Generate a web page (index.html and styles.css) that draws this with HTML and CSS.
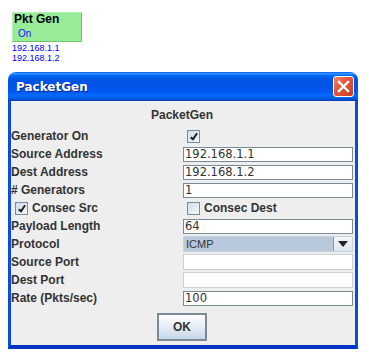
FILE: index.html
```
<!DOCTYPE html>
<html lang="en">
<head>
    <meta charset="UTF-8">
    <title>PacketGen</title>
    <link rel="stylesheet" href="styles.css">
</head>
<body>

<div class="node">
    <div class="node-box">
        <div class="node-name">Pkt Gen</div>
        <div class="node-state">On</div>
    </div>
    <div class="node-ips">
        <div>192.168.1.1</div>
        <div>192.168.1.2</div>
    </div>
</div>

<div class="window">
    <div class="titlebar">
        <span class="title">PacketGen</span>
        <span class="close">
            <svg width="13" height="13" viewBox="0 0 13 13">
                <path d="M2 2 L11 11 M11 2 L2 11" stroke="#fff" stroke-width="2.4" stroke-linecap="square"/>
            </svg>
        </span>
    </div>

    <div class="panel">
        <div class="heading">PacketGen</div>

        <div class="form">
            <label>Generator On</label>
            <div class="cell"><span class="check on"></span></div>

            <label>Source Address</label>
            <div class="cell"><div class="field">192.168.1.1</div></div>

            <label>Dest Address</label>
            <div class="cell"><div class="field">192.168.1.2</div></div>

            <label># Generators</label>
            <div class="cell"><div class="field">1</div></div>

            <label class="indent"><span class="check on"></span>Consec Src</label>
            <label class="indent"><span class="check"></span>Consec Dest</label>

            <label>Payload Length</label>
            <div class="cell"><div class="field">64</div></div>

            <label>Protocol</label>
            <div class="cell">
                <div class="combo">
                    <span class="combo-value">ICMP</span>
                    <span class="combo-arrow">
                        <svg width="10" height="6" viewBox="0 0 10 6"><path d="M0 0 H10 L5 6 Z" fill="#222"/></svg>
                    </span>
                </div>
            </div>

            <label>Source Port</label>
            <div class="cell"><div class="field off"></div></div>

            <label>Dest Port</label>
            <div class="cell"><div class="field off"></div></div>

            <label>Rate (Pkts/sec)</label>
            <div class="cell"><div class="field">100</div></div>
        </div>

        <div class="actions">
            <button class="ok">OK</button>
        </div>
    </div>
</div>

</body>
</html>
```

FILE: styles.css
```
body {
    margin: 0;
    background-color: #fff;
    font-family: "Liberation Sans", Arial, sans-serif;
    color: #333;
}

/* node on the canvas */
.node {
    margin: 12px 0 0 12px;
}

.node-box {
    box-sizing: border-box;
    width: 70px;
    height: 30px;
    background-color: #98ec98;
    border: 1px solid #b4f0b4;
    border-right-color: #6cc46c;
    border-bottom-color: #6cc46c;
}

.node-name {
    font-size: 12px;
    font-weight: bold;
    line-height: 12px;
    color: #000;
    padding-left: 1px;
}

.node-state {
    font-size: 10px;
    line-height: 12px;
    margin-top: 3px;
    padding-left: 5px;
    color: #1010ff;
}

.node-ips {
    margin-top: 1px;
    font-size: 9px;
    line-height: 10px;
    color: #0000ff;
}

/* dialog */
.window {
    box-sizing: border-box;
    width: 350px;
    margin: 9px 0 0 8px;
}

.titlebar {
    height: 29px;
    display: flex;
    align-items: center;
    justify-content: space-between;
    padding: 0 4px 0 8px;
    border-radius: 8px 8px 0 0;
    background: linear-gradient(#0058ee 0%, #3593ff 5%, #1680ff 9%, #036ffc 12%, #0262ee 16%, #0057e5 22%, #0054e3 30%, #0055eb 60%, #005bf5 70%, #026afe 80%, #0062ef 88%, #0052d6 94%, #0040ab 100%);
}

.title {
    font-family: "DejaVu Sans", Verdana, sans-serif;
    font-size: 12px;
    font-weight: bold;
    color: #fff;
    text-shadow: 1px 1px 0 #0a1e8c;
    margin-top: 1px;
}

.close {
    box-sizing: border-box;
    width: 21px;
    height: 21px;
    display: flex;
    align-items: center;
    justify-content: center;
    border: 1px solid #fff;
    border-radius: 3px;
    background: linear-gradient(135deg, #f0866a 0%, #e2583e 40%, #c9401f 100%);
}

.panel {
    background-color: #eee;
    border: 3px solid #0a4ce0;
    border-top: 0;
    border-bottom: 4px solid #0034c4;
    padding: 0 2px 2px 0;
}

.heading {
    text-align: center;
    font-size: 12px;
    font-weight: bold;
    line-height: 16px;
    padding: 6px 0 4px;
}

.form {
    display: grid;
    grid-template-columns: 172px 170px;
    grid-auto-rows: 18px;
    align-items: center;
}

.form label {
    font-size: 12px;
    font-weight: bold;
    line-height: 18px;
    display: flex;
    align-items: center;
}

.form label.indent {
    padding-left: 4px;
}

.cell {
    display: flex;
    align-items: center;
}

.check {
    box-sizing: border-box;
    width: 13px;
    height: 13px;
    margin-right: 4px;
    border: 1px solid #7a8a99;
    background: linear-gradient(135deg, #cfdcea 0%, #f4f7fb 100%);
    position: relative;
}

.cell .check {
    margin-left: 4px;
}

.check.on::after {
    content: "";
    position: absolute;
    left: 4px;
    top: 1px;
    width: 2px;
    height: 6px;
    border: solid #222;
    border-width: 0 2px 2px 0;
    transform: rotate(35deg);
}

.field {
    box-sizing: border-box;
    width: 170px;
    height: 15px;
    background-color: #fff;
    border: 1px solid #7a8a99;
    font-family: "DejaVu Sans", sans-serif;
    font-size: 11.5px;
    line-height: 13px;
    color: #333;
    padding-left: 1px;
}

.field.off {
    height: 16px;
    border-color: #c8d2dc;
}

.combo {
    box-sizing: border-box;
    width: 170px;
    height: 16px;
    display: flex;
    border: 1px solid #c8d2dc;
    background-color: #b8c9dc;
}

.combo-value {
    flex: 1;
    font-size: 11px;
    line-height: 14px;
    padding-left: 2px;
    color: #333;
}

.combo-arrow {
    width: 18px;
    display: flex;
    align-items: center;
    justify-content: center;
    border-left: 1px solid #8a9aab;
    background: linear-gradient(#f4f7fb, #dde6ef);
}

.actions {
    display: flex;
    justify-content: center;
    padding: 6px 0 2px;
}

.ok {
    box-sizing: border-box;
    width: 50px;
    height: 28px;
    border: 2px solid #7a8a99;
    background: linear-gradient(#ffffff, #dfe9f4 60%, #c6d6e8);
    font-family: "Liberation Sans", Arial, sans-serif;
    font-size: 12px;
    font-weight: bold;
    color: #333;
    padding: 0;
}
```
